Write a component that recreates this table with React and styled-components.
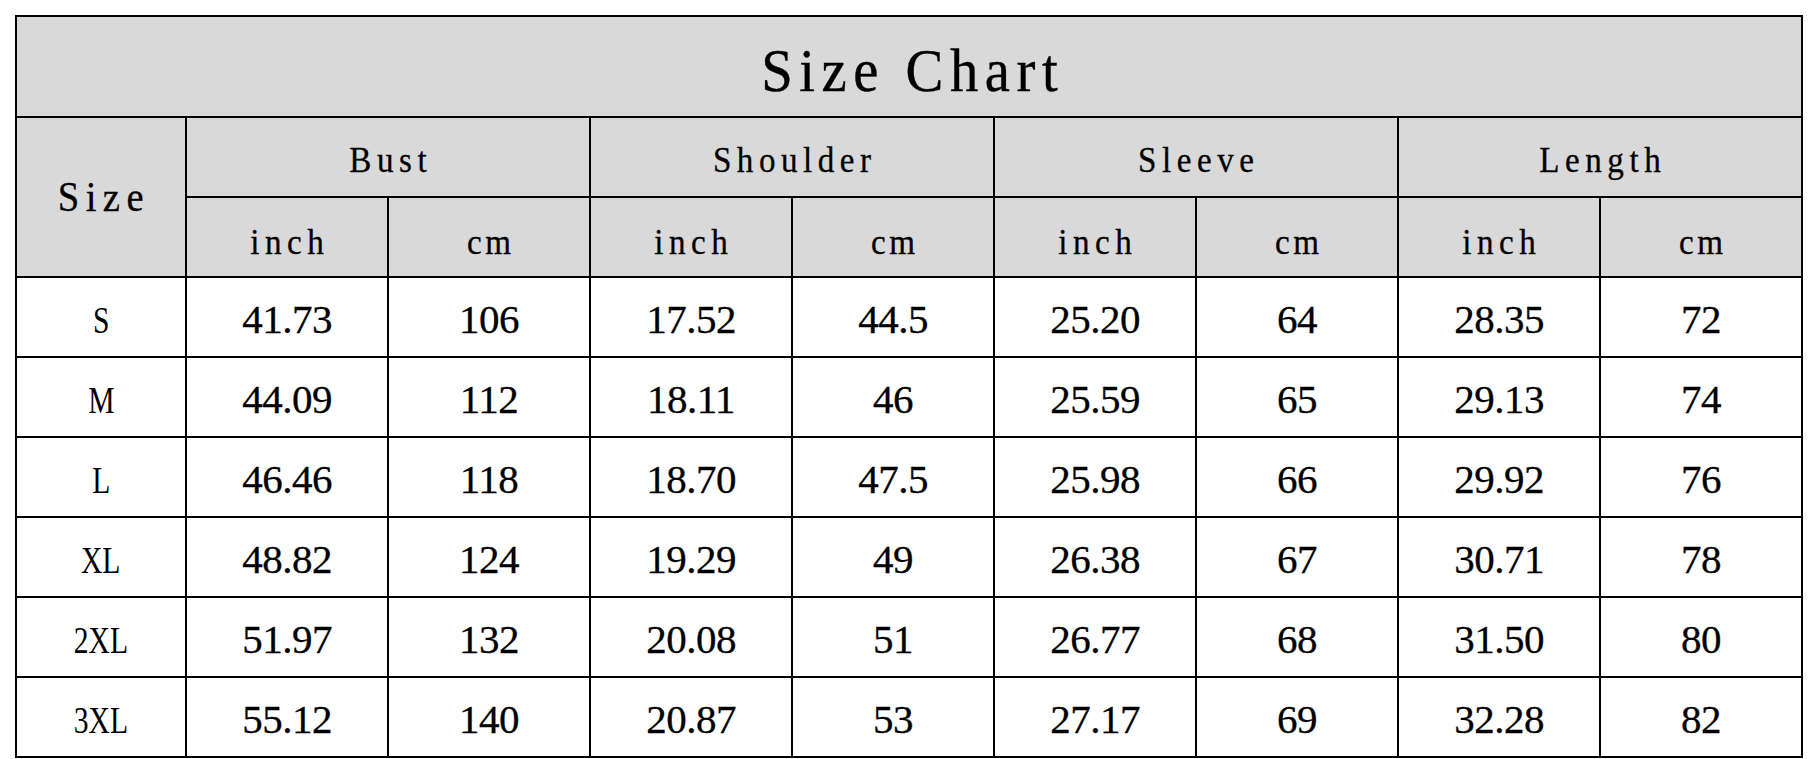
import React from "react";
import styled, { createGlobalStyle } from "styled-components";

const GlobalStyle = createGlobalStyle`
  html, body {
    margin: 0;
    padding: 0;
    background: #ffffff;
  }
  body {
    font-family: "Liberation Serif", "Times New Roman", serif;
    color: #000;
  }
`;

const Page = styled.div`
  padding: 15px 0 0 15px;
  width: 1818px;
  height: 759px;
  box-sizing: border-box;
  overflow: hidden;
`;

const Grid = styled.div`
  display: grid;
  grid-template-columns: 168px repeat(8, 200px);
  grid-template-rows: 99px repeat(8, 78px);
  gap: 2px;
  padding: 2px;
  background: #000;
  width: max-content;
`;

const Cell = styled.div`
  display: flex;
  align-items: center;
  justify-content: center;
  background: ${(p) => (p.$head ? "#d9d9d9" : "#ffffff")};
  grid-column: ${(p) => (p.$colSpan ? `span ${p.$colSpan}` : "auto")};
  grid-row: ${(p) => (p.$rowSpan ? `span ${p.$rowSpan}` : "auto")};
  overflow: hidden;
`;

const TitleCell = styled(Cell)`
  grid-column: 1 / -1;
  padding-top: 8px;
  box-sizing: border-box;
`;

const Title = styled.span`
  font-family: "Liberation Serif", serif;
  font-size: 61px;
  letter-spacing: 7px;
  padding-left: 7px;
  transform: scaleX(0.93);
  display: inline-block;
  -webkit-text-stroke: 0.4px #000;
`;

const HeadText = styled.span`
  font-family: "Liberation Serif", serif;
  font-size: ${(p) => p.$size || 36}px;
  letter-spacing: ${(p) => p.$ls ?? 6}px;
  padding-left: ${(p) => p.$ls ?? 6}px;
  display: inline-block;
  transform: scaleX(0.92);
  margin-top: ${(p) => p.$mt || 0}px;
  -webkit-text-stroke: 0.3px #000;
`;

const SizeLabel = styled.span`
  font-family: "Liberation Serif", serif;
  font-size: 37px;
  display: inline-block;
  transform: scaleX(0.8);
  margin-top: 6px;
`;

const Num = styled.span`
  font-family: "Liberation Serif", serif;
  font-size: 41px;
  letter-spacing: -0.5px;
  margin-top: 4px;
  -webkit-text-stroke: 0.3px #000;
`;

const groups = ["Bust", "Shoulder", "Sleeve", "Length"];

const rows = [
  ["S", "41.73", "106", "17.52", "44.5", "25.20", "64", "28.35", "72"],
  ["M", "44.09", "112", "18.11", "46", "25.59", "65", "29.13", "74"],
  ["L", "46.46", "118", "18.70", "47.5", "25.98", "66", "29.92", "76"],
  ["XL", "48.82", "124", "19.29", "49", "26.38", "67", "30.71", "78"],
  ["2XL", "51.97", "132", "20.08", "51", "26.77", "68", "31.50", "80"],
  ["3XL", "55.12", "140", "20.87", "53", "27.17", "69", "32.28", "82"],
];

export default function App() {
  return (
    <>
      <GlobalStyle />
      <Page>
        <Grid>
          <TitleCell $head>
            <Title>Size Chart</Title>
          </TitleCell>

          <Cell $head $rowSpan={2}>
            <HeadText $size={42} $ls={7}>Size</HeadText>
          </Cell>
          {groups.map((g) => (
            <Cell $head $colSpan={2} key={g}>
              <HeadText $mt={6}>{g}</HeadText>
            </Cell>
          ))}
          {groups.map((g) => (
            <React.Fragment key={g + "-u"}>
              <Cell $head>
                <HeadText $mt={10}>inch</HeadText>
              </Cell>
              <Cell $head>
                <HeadText $mt={10} $ls={4}>cm</HeadText>
              </Cell>
            </React.Fragment>
          ))}

          {rows.map((r) => (
            <React.Fragment key={r[0]}>
              <Cell>
                <SizeLabel>{r[0]}</SizeLabel>
              </Cell>
              {r.slice(1).map((v, i) => (
                <Cell key={i}>
                  <Num>{v}</Num>
                </Cell>
              ))}
            </React.Fragment>
          ))}
        </Grid>
      </Page>
    </>
  );
}
